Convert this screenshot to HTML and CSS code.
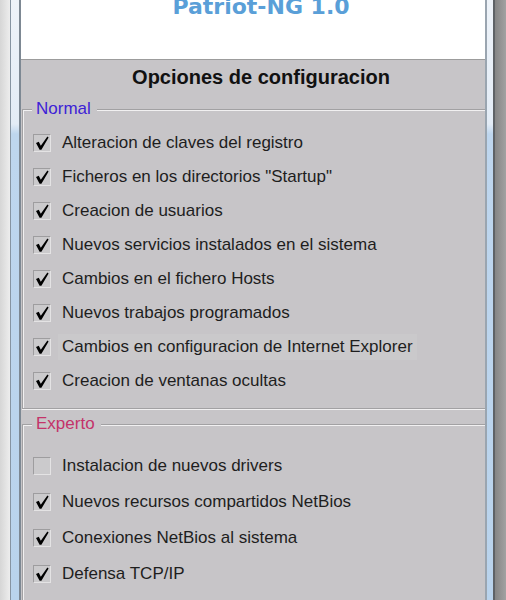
FILE: index.html
```html
<!DOCTYPE html>
<html lang="es">
<head>
    <meta charset="UTF-8">
    <meta name="viewport" content="width=device-width, initial-scale=1.0">
    <title>Patriot-NG 1.0</title>
    <link rel="stylesheet" href="styles.css">
</head>
<body>
    <div class="desktop"></div>
    <div class="frame frame-left"></div>

    <div class="window">
        <header class="banner">
            <h1>Patriot-NG 1.0</h1>
        </header>

        <main class="panel">
            <h2>Opciones de configuracion</h2>

            <fieldset class="group normal">
                <legend>Normal</legend>
                <ul class="options">
                    <li><span class="box checked"></span><span class="label">Alteracion de claves del registro</span></li>
                    <li><span class="box checked"></span><span class="label">Ficheros en los directorios "Startup"</span></li>
                    <li><span class="box checked"></span><span class="label">Creacion de usuarios</span></li>
                    <li><span class="box checked"></span><span class="label">Nuevos servicios instalados en el sistema</span></li>
                    <li><span class="box checked"></span><span class="label">Cambios en el fichero Hosts</span></li>
                    <li><span class="box checked"></span><span class="label">Nuevos trabajos programados</span></li>
                    <li class="focused"><span class="box checked"></span><span class="label">Cambios en configuracion de Internet Explorer</span></li>
                    <li><span class="box checked"></span><span class="label">Creacion de ventanas ocultas</span></li>
                </ul>
            </fieldset>

            <fieldset class="group expert">
                <legend>Experto</legend>
                <ul class="options">
                    <li><span class="box"></span><span class="label">Instalacion de nuevos drivers</span></li>
                    <li><span class="box checked"></span><span class="label">Nuevos recursos compartidos NetBios</span></li>
                    <li><span class="box checked"></span><span class="label">Conexiones NetBios al sistema</span></li>
                    <li><span class="box checked"></span><span class="label">Defensa TCP/IP</span></li>
                    <li><span class="box"></span></li>
                </ul>
            </fieldset>
        </main>
    </div>

    <div class="frame frame-right"></div>
    <div class="shadow"></div>
</body>
</html>
```

FILE: styles.css
```css
* {
    margin: 0;
    padding: 0;
    box-sizing: border-box;
}

html, body {
    height: 100%;
    overflow: hidden;
}

body {
    display: flex;
    font-family: "Liberation Sans", Arial, sans-serif;
    background: #c7c5c8;
}

/* Window chrome */
.desktop {
    width: 11px;
    flex: none;
    background: linear-gradient(90deg, #d6d6d6, #ededed);
    border-right: 1px solid #8694a2;
}

.frame {
    width: 10px;
    flex: none;
    background: linear-gradient(#eef3f9 0, #e3ecf6 124px, #bed6ee 134px, #b9d3ec 100%);
}

.frame-left {
    border-right: 2px solid #7d8893;
}

.frame-right {
    border-left: 2px solid #9aa5b0;
    border-right: 2px solid #5e6266;
}

.shadow {
    flex: 1;
    background: linear-gradient(90deg, #858585, #a2a2a2);
}

.window {
    width: 464px;
    flex: none;
    display: flex;
    flex-direction: column;
    overflow: hidden;
}

/* White banner with the product name */
.banner {
    height: 60px;
    flex: none;
    background: #fff;
    border-bottom: 1px solid #9c9c9c;
    padding-left: 16px;
    text-align: center;
}

.banner h1 {
    margin-top: -8px;
    font-family: "DejaVu Sans", Verdana, sans-serif;
    font-size: 22px;
    line-height: 30px;
    font-weight: bold;
    color: #5a9fd8;
}

/* Settings panel */
.panel {
    flex: 1;
    background: #c7c5c8;
}

.panel h2 {
    padding-left: 16px;
    text-align: center;
    font-size: 20px;
    line-height: 34px;
    font-weight: bold;
    color: #111;
}

.group {
    margin: 5px -6px 0 1px;
    padding: 0 9px 10px;
    border: 1px solid #a2a1a3;
    box-shadow: inset 1px 1px 0 #f1f0f1, 0 1px 0 #f1f0f1;
}

.group legend {
    padding: 0 6px 0 4px;
    font-size: 17px;
    line-height: 20px;
    background: #c7c5c8;
}

.normal legend {
    color: #3d22d6;
}

.expert {
    margin-top: 5px;
    padding-bottom: 0;
}

.expert legend {
    color: #c4336a;
}

.options {
    list-style: none;
    margin-top: 7px;
}

.expert .options {
    margin-top: 14px;
}

.options li {
    display: flex;
    align-items: center;
    height: 34px;
    font-size: 17px;
    color: #1e1e1e;
}

.expert .options li {
    height: 36px;
}

.label {
    margin-left: 7px;
    padding: 3px 4px;
}

.focused .label {
    background: #cac9cb;
}

/* Checkbox squares */
.box {
    width: 18px;
    height: 18px;
    margin-left: 1px;
    flex: none;
    border: 1px solid;
    border-color: #9e9d9f #e4e3e4 #e4e3e4 #9e9d9f;
    background: #cbcacc;
}

.box.checked {
    background: #cbcacc url("data:image/svg+xml,%3Csvg xmlns='http://www.w3.org/2000/svg' width='16' height='16' viewBox='0 0 16 16'%3E%3Cpolygon points='2,8 4.8,6.8 6.8,10.8 13.4,1.6 14.6,2.6 7.4,14.8 5.6,14.8' fill='%23000'/%3E%3C/svg%3E") no-repeat center;
}
```
